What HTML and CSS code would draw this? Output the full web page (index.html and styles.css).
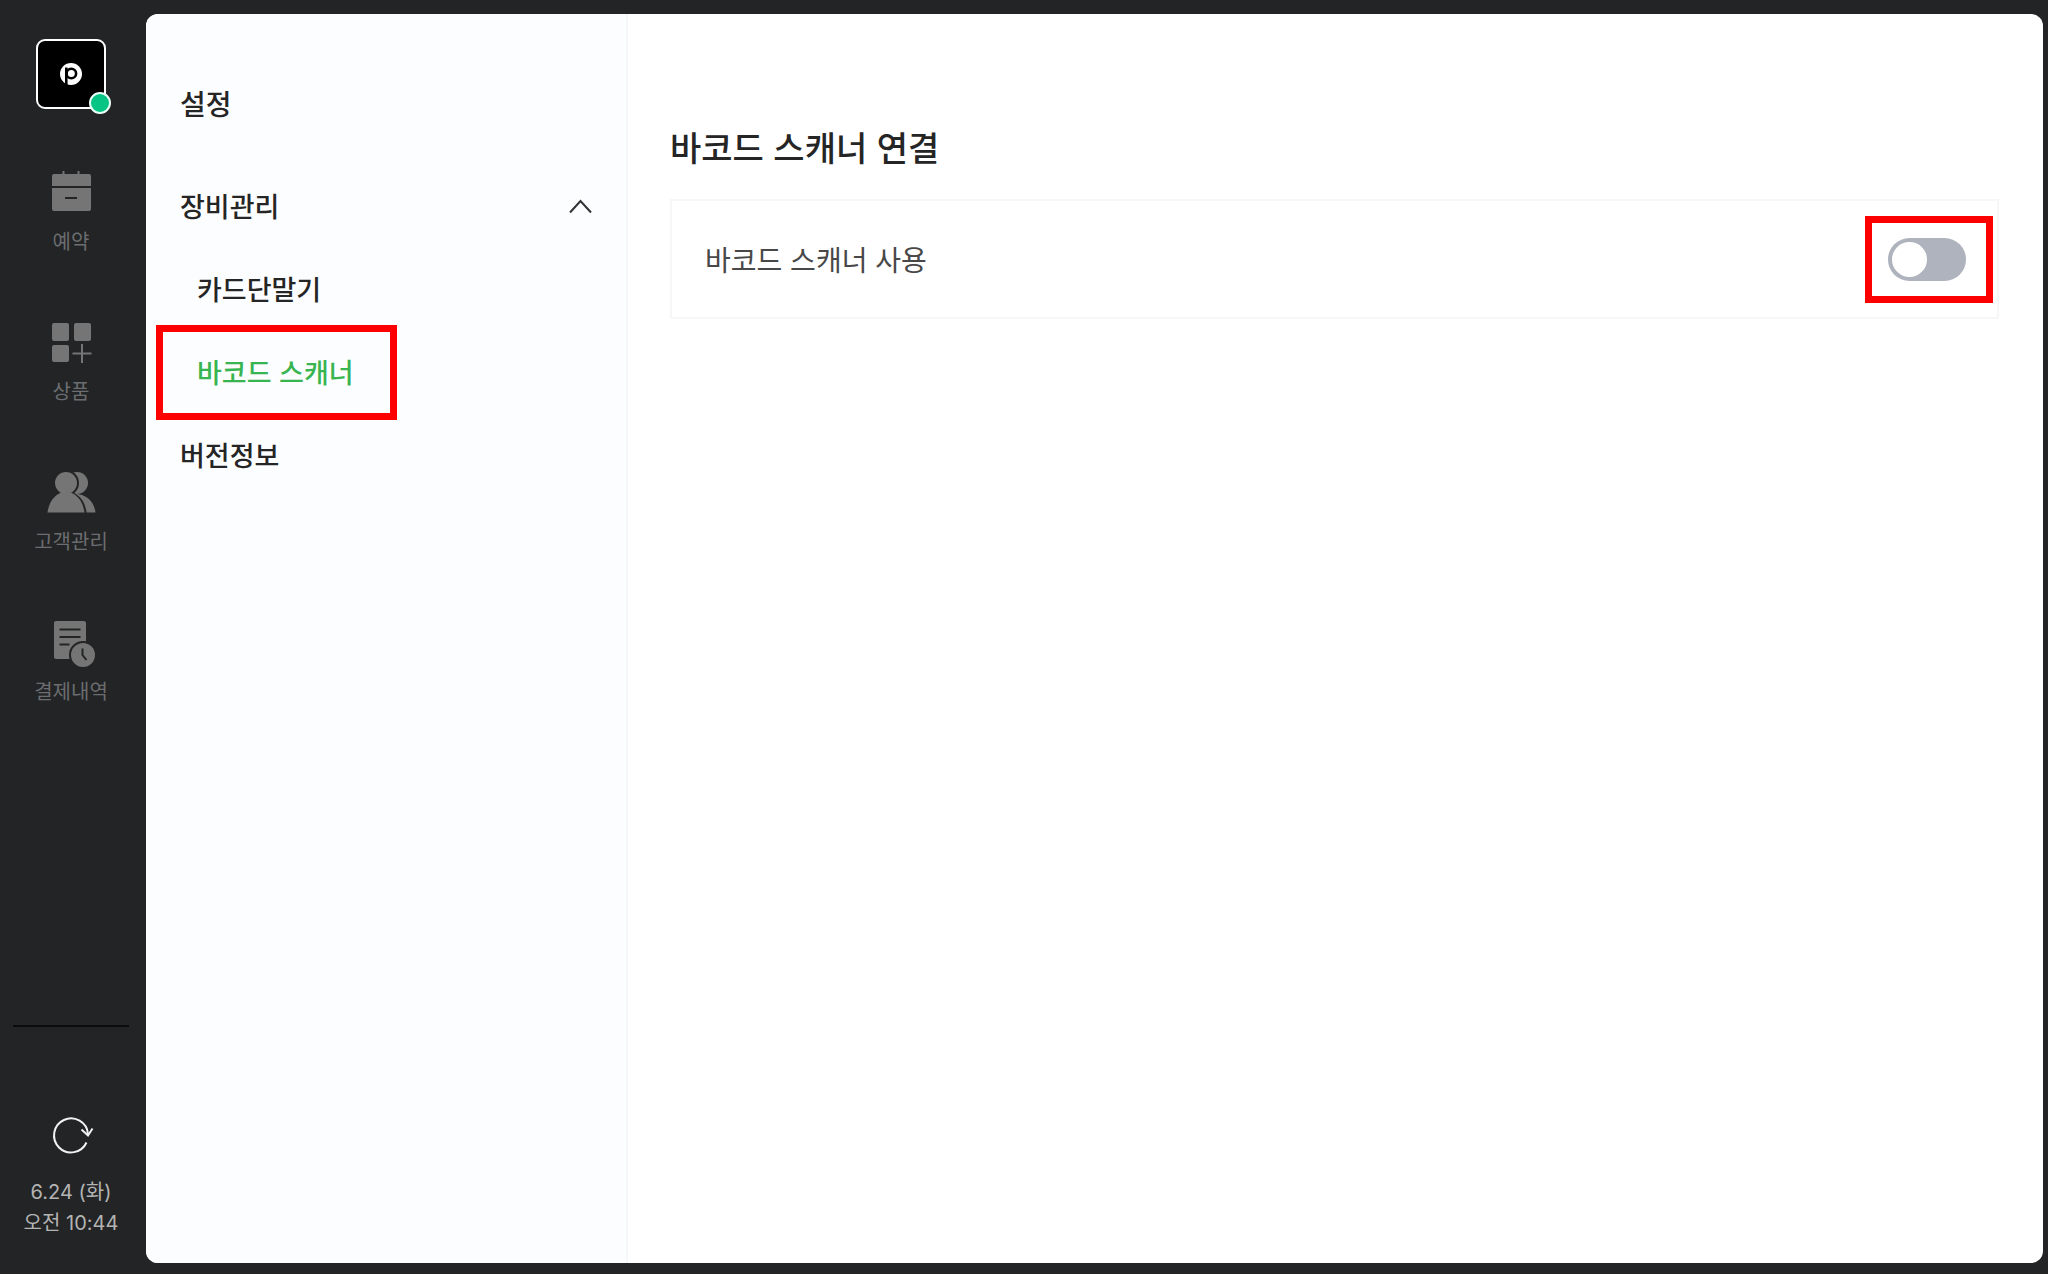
FILE: index.html
```html
<!DOCTYPE html>
<html lang="ko">
<head>
  <meta charset="UTF-8">
  <meta name="viewport" content="width=device-width, initial-scale=1.0">
  <title>바코드 스캐너 연결</title>
  <link rel="stylesheet" href="styles.css">
</head>
<body>
  <aside class="sidebar">
    <button class="logo" type="button" aria-label="설정">
      <svg width="24" height="24" viewBox="0 0 24 24">
        <circle cx="12" cy="12" r="11" fill="#fff"/>
        <circle cx="12.300" cy="11.500" r="4.800" fill="none" stroke="#000" stroke-width="2.600"/>
        <path d="M7.300 5.500V24" stroke="#000" stroke-width="2.600"/>
      </svg>
      <span class="status"></span>
    </button>

    <nav class="nav">
      <a class="nav-item" href="#">
        <svg class="icon" viewBox="0 0 48 48">
          <path d="M7 6h35a2 2 0 0 1 2 2v10H5V8a2 2 0 0 1 2-2zM5 20h39v21a2 2 0 0 1-2 2H7a2 2 0 0 1-2-2z"/>
          <path class="line" d="M16.500 3v5M31.500 3v5"/>
          <path class="cut" d="M18 30h12"/>
        </svg>
        <span>예약</span>
      </a>
      <a class="nav-item" href="#">
        <svg class="icon" viewBox="0 0 48 48">
          <rect x="5" y="5" width="17" height="18" rx="2"/>
          <rect x="27" y="5" width="17" height="18" rx="2"/>
          <rect x="5" y="27" width="17" height="17" rx="2"/>
          <path class="line" d="M35 26v19M25.500 35.500h19"/>
        </svg>
        <span>상품</span>
      </a>
      <a class="nav-item" href="#">
        <svg class="icon" viewBox="0 0 48 48">
          <circle cx="30" cy="15" r="11"/>
          <path d="M28 26c11 0 19 7 20.500 18.500H28z"/>
          <path class="gap" d="M.500 44.500C2 33 9 25.500 19 25.500S36 33 37.500 44.500z"/>
          <circle class="gap" cx="19" cy="15" r="11"/>
          <path d="M.500 44.500C2 33 9 24 19 24S36 33 37.500 44.500z"/>
          <circle cx="19" cy="15" r="11"/>
        </svg>
        <span>고객관리</span>
      </a>
      <a class="nav-item" href="#">
        <svg class="icon" viewBox="0 0 48 48">
          <rect x="7" y="3" width="32" height="38" rx="2"/>
          <path class="cut" d="M12.500 11.500h21M12.500 19h21M12.500 26.500h10"/>
          <circle class="gap" cx="36" cy="37" r="12"/>
          <circle cx="36" cy="37" r="12"/>
          <path class="cut" d="M35.500 30.500v6.500l4 5"/>
        </svg>
        <span>결제내역</span>
      </a>
    </nav>

    <div class="sync">
      <button class="refresh" type="button" aria-label="새로고침">
        <svg width="48" height="48" viewBox="0 0 48 48">
          <path d="M39.500 31.500A17 17 0 1 1 41 23"/>
          <path d="M34.500 18.500l6.500 6 4.500-7"/>
        </svg>
      </button>
      <div class="clock">6.24 (화)<br>오전 10:44</div>
    </div>
  </aside>

  <div class="panel">
    <section class="menu">
      <h2>설정</h2>
      <button class="menu-row" type="button" aria-expanded="true">
        장비관리
        <svg width="24" height="24" viewBox="0 0 24 24"><path d="M2 18.500L12.500 7 23 18.500"/></svg>
      </button>
      <a class="menu-row sub" href="#">카드단말기</a>
      <a class="menu-row sub active" href="#">바코드 스캐너</a>
      <a class="menu-row" href="#">버전정보</a>
    </section>

    <main class="content">
      <h1>바코드 스캐너 연결</h1>
      <div class="card">
        <label for="scanner">바코드 스캐너 사용</label>
        <div class="toggle-wrap">
          <input class="toggle" type="checkbox" role="switch" id="scanner">
        </div>
      </div>
    </main>
  </div>
</body>
</html>
```
FILE: styles.css
```css
*,
*::before,
*::after {
  box-sizing: border-box;
}
body {
  margin: 0;
  min-height: 100vh;
  display: flex;
  background: #232425;
  color: #252525;
  font-family: "Noto Sans CJK KR", sans-serif;
}
a {
  color: inherit;
  text-decoration: none;
}
button {
  border: none;
  background: none;
  padding: 0;
  color: inherit;
  font: inherit;
  cursor: pointer;
}

/* left bar */
.sidebar {
  width: 142px;
  flex-shrink: 0;
  padding: 39px 0 35px;
  display: flex;
  flex-direction: column;
  align-items: center;
}
.logo {
  position: relative;
  width: 70px;
  height: 70px;
  display: flex;
  align-items: center;
  justify-content: center;
  background: #000;
  border: 2px solid #fff;
  border-radius: 9px;
}
.status {
  position: absolute;
  right: -7px;
  bottom: -7px;
  width: 22px;
  height: 22px;
  border: 2px solid #e8fff6;
  border-radius: 50%;
  background: #06c584;
}
.nav {
  margin-top: 59px;
  display: flex;
  flex-direction: column;
  gap: 63px;
}
.nav-item {
  display: flex;
  flex-direction: column;
  align-items: center;
  gap: 11px;
  color: #6b6d70;
  font-size: 20px;
  line-height: 28px;
}
.icon {
  width: 48px;
  height: 48px;
  fill: #757575;
  overflow: visible;
}
.icon .line {
  stroke: #757575;
  stroke-width: 2;
}
.icon .cut {
  fill: none;
  stroke: #232425;
  stroke-width: 2;
}
.icon .gap {
  fill: #232425;
  stroke: #232425;
  stroke-width: 4;
}
.sync {
  width: 116px;
  margin-top: auto;
  padding-top: 84px;
  border-top: 2px solid #0c0c0c;
  display: flex;
  flex-direction: column;
  align-items: center;
  gap: 18px;
}
.refresh {
  height: 48px;
}
.refresh svg {
  fill: none;
  stroke: #f2f2f2;
  stroke-width: 2;
}
.clock {
  color: #b4b4b4;
  font-family: Inter, "Noto Sans CJK KR", sans-serif;
  font-size: 20px;
  line-height: 31px;
  text-align: center;
  white-space: nowrap;
}

/* white area */
.panel {
  flex: 1;
  display: flex;
  margin: 14px 5px 11px 4px;
  border-radius: 12px;
  background: #fff;
  overflow: hidden;
}
.menu {
  width: 482px;
  flex-shrink: 0;
  padding-top: 47px;
  background: #fcfdfe;
  border-right: 2px solid #f6f7f8;
  font-size: 27px;
  font-weight: 500;
}
.menu h2 {
  margin: 0 0 19px;
  padding: 0 34px;
  font-size: 28px;
  font-weight: 500;
  line-height: 84px;
}
.menu-row {
  position: relative;
  width: 100%;
  height: 83px;
  padding: 0 34px;
  display: flex;
  align-items: center;
  justify-content: space-between;
}
.menu-row svg {
  fill: none;
  stroke: #333;
  stroke-width: 2;
}
.menu-row.sub {
  padding-left: 51px;
}
.menu-row.active {
  color: #38b551;
}
.menu-row.active::after {
  content: "";
  position: absolute;
  left: 10px;
  top: -5px;
  width: 241px;
  height: 95px;
  border: 7px solid #f00;
}
.content {
  flex: 1;
  padding: 109px 44px 44px 42px;
}
.content h1 {
  margin: 0 0 28px;
  font-size: 34px;
  font-weight: 500;
  line-height: 48px;
}
.card {
  min-height: 120px;
  padding: 0 31px 0 33px;
  display: flex;
  align-items: center;
  justify-content: space-between;
  border: 2px solid #f7f7f7;
}
.card label {
  color: #484848;
  font-size: 28px;
}
.toggle-wrap {
  position: relative;
  display: flex;
}
.toggle-wrap::after {
  content: "";
  position: absolute;
  inset: -22px -27px -22px -23px;
  border: 7px solid #f00;
  pointer-events: none;
}
.toggle {
  appearance: none;
  width: 78px;
  height: 43px;
  margin: 0;
  padding: 4px;
  border-radius: 22px;
  background: #aeb3bd;
  cursor: pointer;
}
.toggle::before {
  content: "";
  display: block;
  width: 35px;
  height: 35px;
  border-radius: 50%;
  background: #fff;
}
.toggle:checked {
  background: #38b551;
}
.toggle:checked::before {
  margin-left: auto;
}
```
